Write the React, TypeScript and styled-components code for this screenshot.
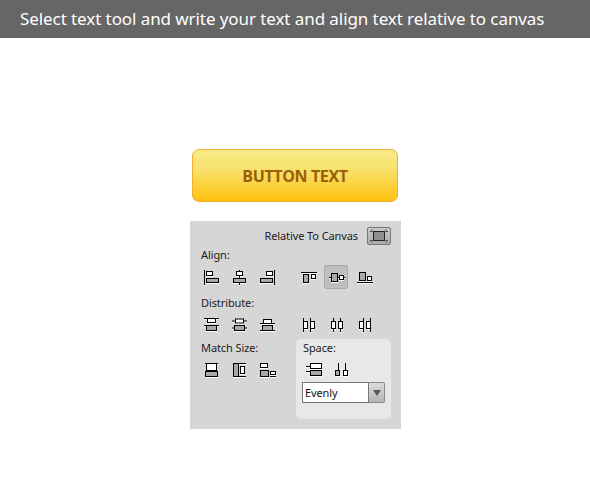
import React from "react";
import styled, { createGlobalStyle } from "styled-components";

const Global = createGlobalStyle`
  html, body { margin: 0; padding: 0; background: #fff; }
`;

const Page = styled.div`
  width: 590px;
  height: 489px;
  overflow: hidden;
  display: flex;
  flex-direction: column;
  background: #fff;
`;

const Banner = styled.header`
  height: 38px;
  flex: none;
  background: #666;
  color: #fff;
  padding-left: 20px;
  font: 400 17px/38px "Noto Sans", sans-serif;
  letter-spacing: -0.08px;
  white-space: nowrap;
`;

const SampleButton = styled.button`
  width: 206px;
  height: 53px;
  flex: none;
  margin: 111px 0 0 192px;
  padding: 0;
  box-sizing: border-box;
  border: 1px solid #f2ad2f;
  border-radius: 7px;
  background: linear-gradient(#f7ec8a 0%, #f9e06a 40%, #ffc30f 100%);
  color: #98600c;
  font: 700 16px "Open Sans", sans-serif;
  letter-spacing: -0.38px;
`;

const Panel = styled.section`
  width: 211px;
  height: 208px;
  flex: none;
  box-sizing: border-box;
  margin: 19px 0 0 190px;
  padding: 6px 10px 10px 9px;
  background: #d6d6d6;
  display: flex;
  flex-direction: column;
  color: #1c1c1c;
  font: 400 11px/14px "Noto Sans", sans-serif;
  letter-spacing: -0.1px;
`;

const TopRow = styled.div`
  height: 18px;
  display: flex;
  justify-content: flex-end;
  align-items: center;
  gap: 9px;
`;

const CanvasToggle = styled.div`
  width: 24px;
  height: 18px;
  box-sizing: border-box;
  border: 1px solid #777;
  border-radius: 2px;
  background: linear-gradient(#c9c9c9, #ababab);
  display: flex;
  align-items: center;
  justify-content: center;
`;

const Label = styled.div<{ $top: number; $left?: number }>`
  height: 14px;
  margin-top: ${(p) => p.$top}px;
  padding-left: ${(p) => p.$left ?? 2}px;
`;

const IconRow = styled.div<{ $top?: number }>`
  display: flex;
  gap: 17px;
  margin-top: ${(p) => p.$top ?? 3}px;
`;

const IconGroup = styled.div<{ $inset?: number }>`
  display: flex;
  gap: 4px;
  margin-left: ${(p) => p.$inset ?? 0}px;
`;

const ToolButton = styled.div<{ $active?: boolean }>`
  width: 24px;
  height: 24px;
  box-sizing: border-box;
  flex: none;
  border-radius: 3px;
  background: ${(p) => (p.$active ? "#bfbfbf" : "transparent")};
  box-shadow: ${(p) => (p.$active ? "inset 0 0 0 1px #a9a9a9" : "none")};
`;

const Glyph = styled.svg`
  display: block;
  overflow: visible;
  filter: drop-shadow(0 1px 0 #fff);
`;

const BottomRow = styled.div`
  display: flex;
  margin-top: 3px;
  justify-content: space-between;
`;

const MatchColumn = styled.div`
  width: 87px;
  display: flex;
  flex-direction: column;
`;

const SpaceCard = styled.div`
  width: 95px;
  height: 80px;
  box-sizing: border-box;
  padding: 2px 6px 0;
  background: #e8e8e8;
  border-radius: 5px;
  display: flex;
  flex-direction: column;
`;

const SpaceIcons = styled.div`
  display: flex;
  gap: 4px;
  margin-top: 3px;
`;

const SelectBox = styled.div`
  width: 83px;
  height: 21px;
  display: flex;
  box-sizing: border-box;
`;

const SelectValue = styled.div`
  width: 67px;
  box-sizing: border-box;
  border: 1px solid #777;
  background: #fff;
  padding-left: 2px;
  line-height: 19px;
  color: #111;
`;

const SelectArrow = styled.div`
  width: 16px;
  box-sizing: border-box;
  border: 1px solid #8a8a8a;
  border-left: none;
  border-radius: 0 2px 2px 0;
  background: linear-gradient(#dcdcdc, #b4b4b4);
  display: flex;
  align-items: center;
  justify-content: center;
  &::after {
    content: "";
    border-left: 4px solid transparent;
    border-right: 4px solid transparent;
    border-top: 6px solid #555;
  }
`;

const W = "#fff";
const G = "#a8a8a8";

type Shape = { x: number; y: number; w: number; h: number; f: string };
type Line = [number, number, number, number];
type IconDef = { r: Shape[]; l: Line[] };

const Icon = ({ r, l, shift = 0 }: IconDef & { shift?: number }) => (
  <Glyph width="24" height="24" viewBox={`${-shift} 0 24 24`}>
    {l.map(([a, b, c, d], i) => (
      <line key={i} x1={a} y1={b} x2={c} y2={d} stroke="#000" strokeWidth="1" />
    ))}
    {r.map((s, i) => (
      <rect key={i} x={s.x} y={s.y} width={s.w} height={s.h} fill={s.f} stroke="#000" strokeWidth="1" />
    ))}
  </Glyph>
);

const alignH: IconDef[] = [
  { l: [[5.5, 5, 5.5, 20]], r: [{ x: 7.5, y: 6.5, w: 6, h: 4, f: W }, { x: 7.5, y: 13.5, w: 12, h: 4, f: G }] },
  { l: [[12.5, 5, 12.5, 20]], r: [{ x: 9.5, y: 6.5, w: 6, h: 4, f: W }, { x: 6.5, y: 13.5, w: 12, h: 4, f: G }] },
  { l: [[19.5, 5, 19.5, 20]], r: [{ x: 11.5, y: 6.5, w: 6, h: 4, f: W }, { x: 5.5, y: 13.5, w: 12, h: 4, f: G }] },
];
const alignV: IconDef[] = [
  { l: [[4, 7.5, 20, 7.5]], r: [{ x: 6.5, y: 9.5, w: 5, h: 8, f: G }, { x: 14.5, y: 9.5, w: 4, h: 4, f: W }] },
  { l: [[4, 12.5, 20, 12.5]], r: [{ x: 6.5, y: 8.5, w: 6, h: 8, f: G }, { x: 14.5, y: 10.5, w: 4, h: 4, f: W }] },
  { l: [[4, 17.5, 20, 17.5]], r: [{ x: 6.5, y: 7.5, w: 6, h: 8, f: G }, { x: 14.5, y: 11.5, w: 4, h: 4, f: W }] },
];
const distH: IconDef[] = [
  { l: [[5, 6.5, 20, 6.5], [5, 13.5, 20, 13.5]], r: [{ x: 8.5, y: 6.5, w: 8, h: 4, f: W }, { x: 7.5, y: 13.5, w: 10, h: 5, f: G }] },
  { l: [[5, 9, 20, 9], [5, 16, 20, 16]], r: [{ x: 8.5, y: 7, w: 8, h: 4, f: W }, { x: 7.5, y: 13.5, w: 10, h: 5, f: G }] },
  { l: [[5, 11.5, 20, 11.5], [5, 18.5, 20, 18.5]], r: [{ x: 8.5, y: 7.5, w: 8, h: 4, f: W }, { x: 7.5, y: 13.5, w: 10, h: 5, f: G }] },
];
const distV: IconDef[] = [
  { l: [[6.5, 6, 6.5, 20], [13.5, 6, 13.5, 20]], r: [{ x: 6.5, y: 9.5, w: 4, h: 7, f: W }, { x: 13.5, y: 9.5, w: 4, h: 7, f: W }] },
  { l: [[8.5, 6, 8.5, 20], [15.5, 6, 15.5, 20]], r: [{ x: 6.5, y: 9.5, w: 4, h: 7, f: W }, { x: 13.5, y: 9.5, w: 4, h: 7, f: W }] },
  { l: [[10.5, 6, 10.5, 20], [17.5, 6, 17.5, 20]], r: [{ x: 6.5, y: 9.5, w: 4, h: 7, f: W }, { x: 13.5, y: 9.5, w: 4, h: 7, f: W }] },
];
const match: IconDef[] = [
  { l: [[6, 5.5, 19, 5.5]], r: [{ x: 7.5, y: 5.5, w: 10, h: 7, f: W }, { x: 6.5, y: 13.5, w: 12, h: 5, f: G }] },
  { l: [[12, 5.5, 19, 5.5], [12, 18.5, 19, 18.5]], r: [{ x: 6.5, y: 5.5, w: 5, h: 13, f: G }, { x: 13.5, y: 8.5, w: 4, h: 7, f: W }] },
  { l: [[15, 18.5, 21, 18.5]], r: [{ x: 5.5, y: 5.5, w: 7, h: 4, f: W }, { x: 5.5, y: 12.5, w: 8, h: 6, f: G }, { x: 15.5, y: 13.5, w: 5, h: 3, f: W }] },
];
const space: IconDef[] = [
  {
    l: [[4, 8.5, 8, 8.5], [4, 13.5, 8, 13.5]],
    r: [{ x: 8.5, y: 5.5, w: 11, h: 5, f: W }, { x: 8.5, y: 12.5, w: 11, h: 5, f: G }],
  },
  {
    l: [[8.5, 5, 8.5, 12], [15.5, 5, 15.5, 12]],
    r: [{ x: 5.5, y: 12.5, w: 4, h: 5, f: G }, { x: 13.5, y: 12.5, w: 4, h: 5, f: W }],
  },
];

const Group = ({ icons, active, shift }: { icons: IconDef[]; active?: number; shift?: number }) => (
  <IconGroup>
    {icons.map((d, i) => (
      <ToolButton key={i} $active={active === i}>
        <Icon {...d} shift={shift} />
      </ToolButton>
    ))}
  </IconGroup>
);

export default function App() {
  return (
    <Page>
      <Global />
      <Banner>Select text tool and write your text and align text relative to canvas</Banner>
      <SampleButton>BUTTON TEXT</SampleButton>
      <Panel>
        <TopRow>
          <span>Relative To Canvas</span>
          <CanvasToggle>
            <svg width="20" height="14" viewBox="0 0 20 14">
              <rect x="4.5" y="2.5" width="11" height="9" fill="#8e8e8e" stroke="#222" />
              <path d="M3 .5V2.5H1M17 .5V2.5H19M3 13.5V11.5H1M17 13.5V11.5H19" fill="none" stroke="#444" />
            </svg>
          </CanvasToggle>
        </TopRow>
        <Label $top={3}>Align:</Label>
        <IconRow>
          <Group icons={alignH} />
          <Group icons={alignV} active={1} shift={1} />
        </IconRow>
        <Label $top={7}>Distribute:</Label>
        <IconRow $top={2}>
          <Group icons={distH} />
          <Group icons={distV} shift={1} />
        </IconRow>
        <BottomRow>
          <MatchColumn>
            <Label $top={2}>Match Size:</Label>
            <IconRow $top={3}>
              <Group icons={match} />
            </IconRow>
          </MatchColumn>
          <SpaceCard>
            <Label $top={0} $left={1}>Space:</Label>
            <SpaceIcons>
              {space.map((d, i) => (
                <ToolButton key={i}>
                  <Icon {...d} />
                </ToolButton>
              ))}
            </SpaceIcons>
            <SelectBox>
              <SelectValue>Evenly</SelectValue>
              <SelectArrow />
            </SelectBox>
          </SpaceCard>
        </BottomRow>
      </Panel>
    </Page>
  );
}
